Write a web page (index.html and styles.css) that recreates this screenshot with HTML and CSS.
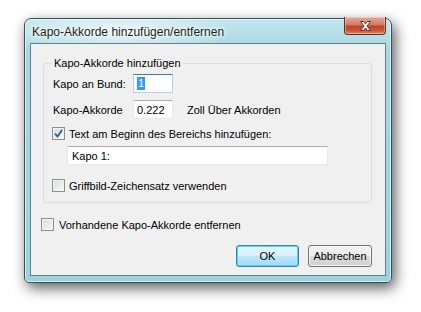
FILE: index.html
```html
<!DOCTYPE html>
<html>

<head>
  <meta charset="utf-8">

  <title>Kapo-Akkorde hinzufügen/entfernen</title>

  <link rel="stylesheet" href="styles.css">
</head>

<body>
<div class="screen">
  <div class="window">
    <div class="titlebar">
      <span class="title">Kapo-Akkorde hinzufügen/entfernen</span>
      <span class="close">
        <svg width="17" height="10" viewBox="0 0 17 10">
          <path d="M3.5 0.5h3l2 2.5l2-2.5h3l-3.5 4.5l3.5 4.5h-3l-2-2.5l-2 2.5h-3l3.5-4.5z" fill="#fff" stroke="#5a3a35" stroke-width="1" stroke-linejoin="round"/>
        </svg>
      </span>
    </div>

    <div class="client">
      <fieldset class="group">
        <legend>Kapo-Akkorde hinzufügen</legend>

        <div class="row row-first">
          <label class="lbl" for="bund">Kapo an Bund:</label>
          <span class="field field-focus"><span class="sel">1</span></span>
        </div>

        <div class="row">
          <label class="lbl">Kapo-Akkorde</label>
          <span class="field">0.222</span>
          <span class="unit">Zoll Über Akkorden</span>
        </div>

        <div class="row row-check">
          <span class="check checked">
            <svg width="9" height="9" viewBox="0 0 9 9">
              <path d="M1 4.5l2.5 3l4.5-6.5" fill="none" stroke="#3556a6" stroke-width="1.8"/>
            </svg>
          </span>
          <span class="check-text">Text am Beginn des Bereichs hinzufügen:</span>
        </div>

        <div class="row row-text">
          <span class="field field-wide">Kapo 1:</span>
        </div>

        <div class="row row-check row-griff">
          <span class="check"></span>
          <span class="check-text">Griffbild-Zeichensatz verwenden</span>
        </div>
      </fieldset>

      <div class="row row-check row-remove">
        <span class="check"></span>
        <span class="check-text">Vorhandene Kapo-Akkorde entfernen</span>
      </div>

      <div class="buttons">
        <button class="btn btn-default">OK</button>
        <button class="btn">Abbrechen</button>
      </div>
    </div>
  </div>
</div>
</body>

</html>
```

FILE: styles.css
```css
* {
  box-sizing: border-box;
}

body {
  margin: 0;
  background: #fff;
  font-family: "Liberation Sans", Arial, sans-serif;
  font-size: 11px;
  color: #000;
}

.screen {
  width: 421px;
  height: 312px;
  padding: 18px 0 0 24px;
}

.window {
  width: 368px;
  height: 265px;
  display: flex;
  flex-direction: column;
  padding: 0 5px 6px 5px;
  border: 1px solid #34525b;
  border-radius: 7px 7px 5px 5px;
  background:
    radial-gradient(ellipse 120px 22px at 90px 12px, rgba(255,255,255,0.75), rgba(255,255,255,0) 100%),
    linear-gradient(to bottom, #c2e5ec 0%, #a8d8e2 12%, #9dd2dd 100%);
  box-shadow: 3px 5px 14px rgba(0,0,0,0.65), inset 0 0 0 1px rgba(255,255,255,0.55);
}

.titlebar {
  height: 24px;
  display: flex;
  align-items: flex-start;
  padding-left: 2px;
}

.title {
  font-size: 12px;
  color: #1e1e1e;
  margin-top: 6px;
  text-shadow: 0 0 6px #fff, 0 0 3px #fff;
}

.close {
  margin-left: auto;
  margin-top: -2px;
  width: 42px;
  height: 18px;
  display: flex;
  align-items: center;
  justify-content: center;
  border: 1px solid #6b2a1e;
  border-top: none;
  border-radius: 0 0 4px 4px;
  background: linear-gradient(to bottom, #e7a898 0%, #d47a66 45%, #c0442c 55%, #c9553a 80%, #e08a6c 100%);
  box-shadow: inset 0 0 0 1px rgba(255,255,255,0.35);
}

.close svg {
  display: block;
}

.client {
  flex: 1;
  display: flex;
  flex-direction: column;
  background: #f0f0f0;
  border: 1px solid #5f848e;
  padding: 0 13px 0 11px;
}

.group {
  margin: 12px 0 0 1px;
  padding: 4px 9px 10px 9px;
  border: 1px solid #d5dfe5;
  border-radius: 3px;
  min-width: 0;
}

.group legend {
  padding: 0 2px;
  margin-left: -1px;
  line-height: 14px;
  font-size: 11px;
}

.row {
  display: flex;
  align-items: center;
  height: 19px;
  margin-top: 7px;
}

.row-first {
  margin-top: 0;
}

.lbl {
  width: 80px;
}

.field {
  width: 40px;
  height: 19px;
  display: flex;
  align-items: center;
  padding-left: 3px;
  background: #fff;
  border: 1px solid #e3e9ef;
  border-top-color: #abadb3;
}

.field-focus {
  border-color: #b5cfe7;
  border-top-color: #3d7bad;
}

.sel {
  background: #3399ff;
  color: #fff;
  padding: 0 1px;
  line-height: 13px;
}

.unit {
  margin-left: 14px;
}

.row-check {
  height: 13px;
  margin-top: 8px;
}

.check {
  width: 13px;
  height: 13px;
  display: flex;
  align-items: center;
  justify-content: center;
  border: 1px solid #8f8f8f;
  background: linear-gradient(135deg, #d6d9de 0%, #eef0f3 70%, #fbfbfb 100%);
  box-shadow: inset 0 0 0 1px #f4f4f4;
  margin-left: -1px;
}

.check.checked {
  background: linear-gradient(135deg, #cfd6e2 0%, #eef1f6 70%, #fff 100%);
}

.check-text {
  margin-left: 4px;
}

.row-text {
  margin-top: 6px;
  padding-left: 14px;
}

.field-wide {
  width: 261px;
  height: 19px;
  padding-left: 4px;
}

.row-griff {
  margin-top: 14px;
}

.row-remove {
  margin-top: 15px;
  padding-left: 0;
}

.row-remove .check-text {
  margin-left: 5px;
}

.buttons {
  display: flex;
  justify-content: flex-end;
  gap: 9px;
  margin-top: 14px;
}

.btn {
  height: 22px;
  padding: 0;
  font-family: "Liberation Sans", Arial, sans-serif;
  font-size: 11px;
  color: #000;
  border: 1px solid #707070;
  border-radius: 3px;
  background: linear-gradient(to bottom, #f2f2f2 0%, #ebebeb 48%, #dddddd 52%, #cfcfcf 100%);
  box-shadow: inset 0 0 0 1px rgba(255,255,255,0.8);
  width: 64px;
}

.btn-default {
  width: 63px;
  border-color: #3c7fb1;
  background: linear-gradient(to bottom, #eaf6fd 0%, #d9f0fc 48%, #bee6fd 52%, #a7d9f5 100%);
  box-shadow: inset 0 0 0 1px #48d6f7;
}
```
